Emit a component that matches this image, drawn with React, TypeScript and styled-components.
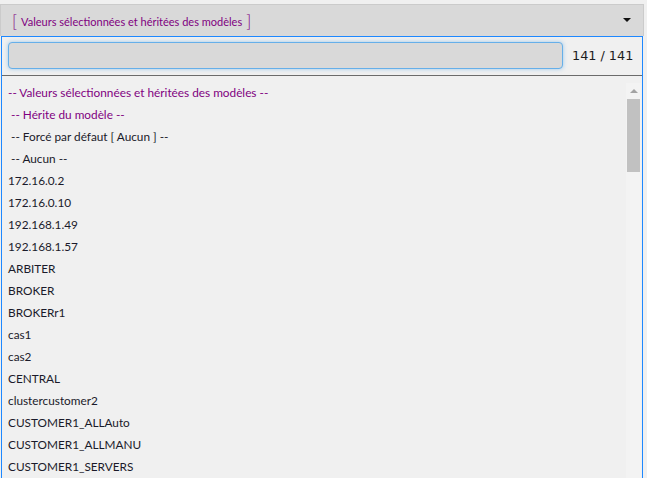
import React from "react";
import styled, { createGlobalStyle } from "styled-components";

const GlobalStyle = createGlobalStyle`
  html, body {
    margin: 0;
    padding: 0;
    background: #f0f0f0;
    overflow: hidden;
  }
  body {
    font-family: Lato, "Open Sans", sans-serif;
  }
`;

const Wrapper = styled.div`
  width: 644px;
  padding-top: 4px;
`;

const Header = styled.div`
  height: 32px;
  border: 1px solid #cbcbcb;
  border-bottom: none;
  background: #d9d9d9;
  display: flex;
  align-items: center;
  justify-content: space-between;
  padding: 0 12px 0 11px;
  box-sizing: border-box;
`;

const Title = styled.span`
  color: #800080;
  font-size: 11px;
  display: flex;
  align-items: center;
  gap: 4px;
  padding-top: 2px;
`;

const Bracket = styled.span`
  font-size: 17px;
  font-weight: 300;
  line-height: 1;
  margin-top: -2px;
`;

const Caret = styled.span`
  width: 0;
  height: 0;
  border-left: 4px solid transparent;
  border-right: 4px solid transparent;
  border-top: 4px solid #111;
  margin-top: -2px;
`;

const Panel = styled.div`
  margin: 0 1px;
  border: 1px solid #1e88ff;
  border-bottom: none;
  background: #f0f0f0;
`;

const SearchRow = styled.div`
  display: flex;
  align-items: center;
  padding: 5px 8px 6px 6px;
  gap: 9px;
`;

const SearchInput = styled.input`
  flex: 0 0 555px;
  height: 27px;
  box-sizing: border-box;
  background: #d9d9d9;
  border: 1px solid #66afe9;
  border-radius: 4px;
  box-shadow: 0 0 4px rgba(102, 175, 233, 0.6);
  outline: none;
`;

const Count = styled.span`
  font-family: "DejaVu Sans", Verdana, sans-serif;
  font-size: 12.8px;
  color: #1c1c1c;
  white-space: nowrap;
`;

const Body = styled.div`
  display: flex;
  border-top: 1px solid #6b6b6b;
  height: 490px;
`;

const List = styled.ul`
  flex: 1;
  list-style: none;
  margin: 0;
  padding: 6px 0 0 6px;
  overflow: hidden;
`;

const Item = styled.li<{ $accent?: boolean }>`
  height: 22px;
  line-height: 22px;
  font-size: 11.8px;
  white-space: pre;
  color: ${(p) => (p.$accent ? "#800080" : "#1a1a2a")};
`;

const Scrollbar = styled.div`
  flex: 0 0 15px;
  margin: 7px 1px 0 0;
  background: #f3f3f3;
  display: flex;
  flex-direction: column;
  align-items: center;
`;

const ArrowButton = styled.div`
  height: 16px;
  width: 100%;
  display: flex;
  align-items: center;
  justify-content: center;

  &::before {
    content: "";
    width: 0;
    height: 0;
    border-left: 4px solid transparent;
    border-right: 4px solid transparent;
    border-bottom: 4px solid #a3a3a3;
  }
`;

const Thumb = styled.div`
  width: 13px;
  height: 73px;
  background: #c1c1c1;
`;

const items: { label: string; accent?: boolean }[] = [
  { label: "-- Valeurs sélectionnées et héritées des modèles --", accent: true },
  { label: " -- Hérite du modèle --", accent: true },
  { label: " -- Forcé par défaut [ Aucun ] --" },
  { label: " -- Aucun --" },
  { label: "172.16.0.2" },
  { label: "172.16.0.10" },
  { label: "192.168.1.49" },
  { label: "192.168.1.57" },
  { label: "ARBITER" },
  { label: "BROKER" },
  { label: "BROKERr1" },
  { label: "cas1" },
  { label: "cas2" },
  { label: "CENTRAL" },
  { label: "clustercustomer2" },
  { label: "CUSTOMER1_ALLAuto" },
  { label: "CUSTOMER1_ALLMANU" },
  { label: "CUSTOMER1_SERVERS" },
  { label: "CUSTOMER2_ALL" },
  { label: "CUSTOMER2_SERVERS" },
];

const App: React.FC = () => {
  return (
    <>
      <GlobalStyle />
      <Wrapper>
        <Header>
          <Title>
            <Bracket>[</Bracket>
            Valeurs sélectionnées et héritées des modèles
            <Bracket>]</Bracket>
          </Title>
          <Caret />
        </Header>
        <Panel>
          <SearchRow>
            <SearchInput type="text" />
            <Count>141 / 141</Count>
          </SearchRow>
          <Body>
            <List>
              {items.map((it, i) => (
                <Item key={i} $accent={it.accent}>
                  {it.label}
                </Item>
              ))}
            </List>
            <Scrollbar>
              <ArrowButton />
              <Thumb />
            </Scrollbar>
          </Body>
        </Panel>
      </Wrapper>
    </>
  );
};

export default App;
